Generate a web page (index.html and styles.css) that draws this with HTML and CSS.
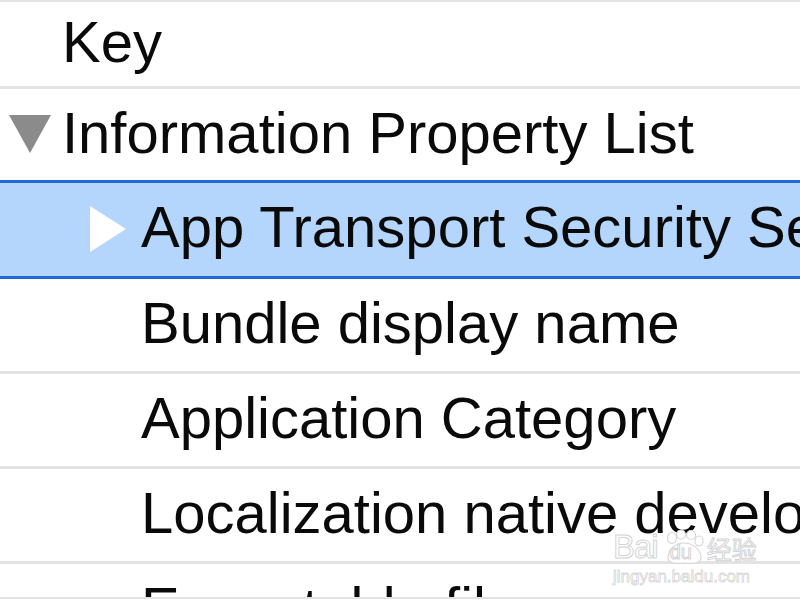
FILE: index.html
```html
<!DOCTYPE html>
<html lang="en">
<head>
<meta charset="utf-8">
<title>Info.plist</title>
<link rel="stylesheet" href="styles.css">
</head>
<body>
<div class="list">
  <div class="row header"><span class="key">Key</span></div>
  <div class="row info pre-sel lvl0">
    <span class="toggle down"><svg width="42" height="38" viewBox="0 0 42 38"><polygon points="0,0 42,0 21,38" fill="#8b8b8b"/></svg></span><span class="key">Information Property List</span>
  </div>
  <div class="row selected lvl1">
    <span class="toggle right"><svg width="36" height="46" viewBox="0 0 36 46"><polygon points="0,0 36,23 0,46" fill="#ffffff"/></svg></span><span class="key">App Transport Security Settings</span>
  </div>
  <div class="row lvl1"><span class="toggle none"></span><span class="key">Bundle display name</span></div>
  <div class="row lvl1"><span class="toggle none"></span><span class="key">Application Category</span></div>
  <div class="row lvl1"><span class="toggle none"></span><span class="key">Localization native development region</span></div>
  <div class="row lvl1 last"><span class="toggle none"></span><span class="key">Executable file</span></div>
</div>
<div class="watermark">
  <div class="wm-top">
    <span class="wm-bai">Bai</span>
    <span class="wm-paw">
      <svg width="40" height="34" viewBox="0 0 40 34">
        <g fill="#ffffff" stroke="#d6d6d6" stroke-width="1.2">
          <ellipse cx="8" cy="8" rx="4.5" ry="5.5"/>
          <ellipse cx="17" cy="4.5" rx="4.5" ry="4.5"/>
          <ellipse cx="27" cy="5" rx="4.5" ry="4.5"/>
          <ellipse cx="35" cy="11" rx="4" ry="5"/>
          <path d="M4 28 C4 18 13 13 20 13 C28 13 37 19 37 28 C37 33 30 34 20 33 C10 34 4 33 4 28 Z"/>
        </g>
      </svg>
      <span class="wm-du">du</span>
    </span>
    <span class="wm-jy">经验</span>
  </div>
  <div class="wm-url">jingyan.baidu.com</div>
</div>
</body>
</html>
```

FILE: styles.css
```css
html, body {
  margin: 0;
  padding: 0;
  background: #ffffff;
}

body {
  width: 800px;
  height: 600px;
  overflow: hidden;
  position: relative;
  font-family: "Liberation Sans", Arial, Helvetica, sans-serif;
}

.list {
  height: 595px;
  overflow: hidden;
  border-top: 2px solid #e3e3e3;
  border-bottom: 2px solid #e2e2e2;
}

.row {
  height: 92px;
  line-height: 88px;
  font-size: 58px;
  color: #0a0a0a;
  white-space: nowrap;
  overflow: hidden;
  border-bottom: 3px solid #e3e3e3;
  display: block;
}

.header {
  height: 84px;
  line-height: 80px;
  padding-left: 62px;
}

.info {
  height: 91px;
}

.pre-sel {
  border-bottom-color: #2468d6;
}

.selected {
  height: 93px;
  background: #b4d5fc;
  border-bottom-color: #2468d6;
}

.lvl0 {
  padding-left: 9px;
}

.lvl1 {
  padding-left: 90px;
}

.toggle {
  display: inline-block;
  vertical-align: baseline;
}

.toggle svg {
  display: inline-block;
}

.toggle.down {
  width: 53px;
}

.toggle.right {
  width: 51px;
}

.toggle.right svg {
  vertical-align: -5px;
}

.toggle.none {
  width: 51px;
}

.last {
  border-bottom: none;
}

.watermark {
  position: absolute;
  left: 613px;
  top: 526px;
  width: 150px;
  color: #ffffff;
  pointer-events: none;
}

.wm-top {
  display: flex;
  align-items: flex-end;
  height: 38px;
}

.wm-bai,
.wm-jy,
.wm-du {
  -webkit-text-stroke: 1px #d4d4d4;
  color: #ffffff;
}

.wm-bai {
  font-family: "Liberation Sans", Arial, sans-serif;
  font-size: 33px;
  line-height: 34px;
  letter-spacing: -1px;
}

.wm-paw {
  position: relative;
  width: 40px;
  height: 34px;
  margin: 0 3px 0 6px;
}

.wm-paw svg {
  display: block;
}

.wm-du {
  position: absolute;
  left: 6px;
  top: 12px;
  font-size: 20px;
  line-height: 20px;
  font-family: "Liberation Sans", Arial, sans-serif;
}

.wm-jy {
  font-family: "Noto Sans CJK SC", sans-serif;
  font-size: 25px;
  line-height: 32px;
}

.wm-url {
  font-family: "Liberation Sans", Arial, sans-serif;
  font-size: 17px;
  line-height: 20px;
  margin-top: 3px;
  -webkit-text-stroke: 0.8px #d6d6d6;
  color: #ffffff;
}
```
